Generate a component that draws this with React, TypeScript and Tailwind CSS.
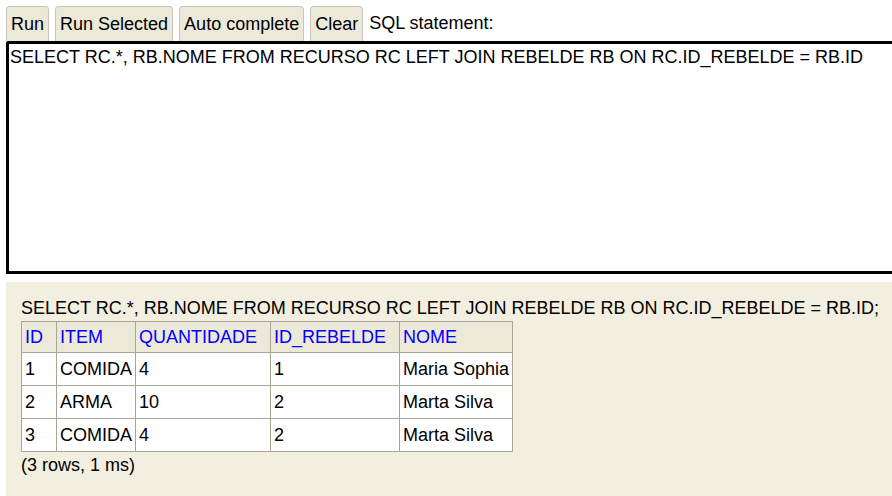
const SQL = "SELECT RC.*, RB.NOME FROM RECURSO RC LEFT JOIN REBELDE RB ON RC.ID_REBELDE = RB.ID";

const COLS = [
  { name: "ID", w: "w-[35px]" },
  { name: "ITEM", w: "w-[79px]" },
  { name: "QUANTIDADE", w: "w-[135px]" },
  { name: "ID_REBELDE", w: "w-[129px]" },
  { name: "NOME", w: "w-[113px]" },
];

const ROWS = [
  ["1", "COMIDA", "4", "1", "Maria Sophia"],
  ["2", "ARMA", "10", "2", "Marta Silva"],
  ["3", "COMIDA", "4", "2", "Marta Silva"],
];

function ToolButton({ label }: { label: string }) {
  return (
    <button className="h-[35px] px-[4px] bg-[#ece9d8] border border-[#c9c6b8] border-b-0 rounded-t-[4px] text-black text-[18px] leading-none">
      {label}
    </button>
  );
}

export default function App() {
  return (
    <div className="w-[892px] h-[496px] overflow-hidden bg-white font-['Liberation_Sans',Arial,sans-serif] text-[18px] text-black">
      {/* toolbar */}
      <div className="flex items-end gap-[6px] pl-[6px] pt-[5px] h-[41px]">
        <ToolButton label="Run" />
        <ToolButton label="Run Selected" />
        <ToolButton label="Auto complete" />
        <ToolButton label="Clear" />
        <span className="self-center leading-none pb-[1px]">SQL statement:</span>
      </div>

      {/* editor */}
      <div className="ml-[6px] w-[900px] h-[233px] border-[3px] border-black border-r-0 rounded-tl-[3px] px-[1px] pt-[1px] whitespace-nowrap leading-[24px]">
        {SQL}
      </div>

      {/* result */}
      <div className="ml-[6px] mt-[8px] h-[220px] bg-[#f2eee0] pl-[15px] pt-[13px]">
        <div className="whitespace-nowrap leading-[26px]">{SQL};</div>
        <table className="border-collapse border border-[#aaa598] table-fixed">
          <thead>
            <tr className="bg-[#ece9d8] h-[31px]">
              {COLS.map((c) => (
                <th
                  key={c.name}
                  className={`${c.w} border border-[#aaa598] px-[3px] text-left font-normal text-[#0000ff]`}
                >
                  {c.name}
                </th>
              ))}
            </tr>
          </thead>
          <tbody>
            {ROWS.map((r, i) => (
              <tr key={i} className="bg-white h-[33px]">
                {r.map((v, j) => (
                  <td key={j} className="border border-[#aaa598] px-[3px] whitespace-nowrap">
                    {v}
                  </td>
                ))}
              </tr>
            ))}
          </tbody>
        </table>
        <div className="leading-[26px]">(3 rows, 1 ms)</div>
      </div>
    </div>
  );
}
